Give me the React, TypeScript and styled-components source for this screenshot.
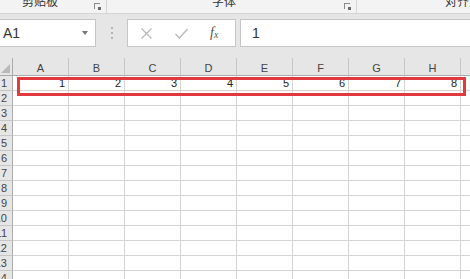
import styled, { createGlobalStyle } from 'styled-components'

const COLS = ['A', 'B', 'C', 'D', 'E', 'F', 'G', 'H']
const ROWS = 14
const UI_FONT = `"Liberation Sans", "Noto Sans CJK SC", sans-serif`

const Global = createGlobalStyle`
    html, body {
        margin: 0;
        padding: 0;
        background: #ffffff;
        overflow: hidden;
    }
    * {
        box-sizing: border-box;
    }
`

export default function App() {
    return (
        <>
            <Global />
            <Page>
                <Ribbon>
                    <Group $width={107}>
                        <GroupLabel $pad={22}>剪贴板</GroupLabel>
                        <Launcher />
                    </Group>
                    <Group $width={250}>
                        <GroupLabel $pad={105}>字体</GroupLabel>
                        <Launcher />
                    </Group>
                    <Group $width={120}>
                        <GroupLabel $pad={88}>对齐方式</GroupLabel>
                    </Group>
                </Ribbon>

                <FormulaBar>
                    <NameBox>
                        A1
                        <DropArrow />
                    </NameBox>
                    <Grip>
                        <span />
                        <span />
                        <span />
                    </Grip>
                    <FxButtons>
                        <FxIcon $muted>
                            <svg width='13' height='13' viewBox='0 0 13 13'>
                                <path d='M1.5 1.5 L11.5 11.5 M11.5 1.5 L1.5 11.5' stroke='currentColor' strokeWidth='1.3' fill='none' />
                            </svg>
                        </FxIcon>
                        <FxIcon $muted>
                            <svg width='15' height='13' viewBox='0 0 15 13'>
                                <path d='M1.5 7 L5.5 11 L13.5 2' stroke='currentColor' strokeWidth='1.4' fill='none' />
                            </svg>
                        </FxIcon>
                        <FxText>
                            f<sub>x</sub>
                        </FxText>
                    </FxButtons>
                    <FormulaInput>1</FormulaInput>
                </FormulaBar>

                <Sheet>
                    <Grid>
                        <Corner>
                            <SelectAll />
                        </Corner>
                        {COLS.map(c => (
                            <ColHead key={c}>{c}</ColHead>
                        ))}
                        <ColHead $last />
                        {Array.from({ length: ROWS }, (_, r) => (
                            <Row key={r} index={r + 1} />
                        ))}
                    </Grid>
                    <Highlight />
                </Sheet>
            </Page>
        </>
    )
}

function Row(props: { index: number }) {
    return (
        <>
            <RowHead>
                <RowNum>{props.index}</RowNum>
            </RowHead>
            {COLS.map((c, i) => (
                <Cell key={c}>{props.index === 1 ? i + 1 : ''}</Cell>
            ))}
            <Cell $last />
        </>
    )
}

const Page = styled('div')`
    width: 470px;
    height: 279px;
    display: flex;
    flex-direction: column;
    background: #e6e6e6;
    font-family: ${UI_FONT};
    overflow: hidden;
`

const Ribbon = styled('div')`
    display: flex;
    height: 14px;
    background: #f3f3f3;
    border-bottom: 1px solid #d5d5d5;
    overflow: hidden;
`

const Group = styled('div')<{ $width: number }>`
    position: relative;
    flex: 0 0 ${({ $width }) => $width}px;
    height: 100%;
    border-right: 1px solid #d5d5d5;
    &:last-child {
        border-right: none;
    }
`

const GroupLabel = styled('div')<{ $pad: number }>`
    padding-left: ${({ $pad }) => $pad}px;
    margin-top: -6px;
    font-size: 12px;
    line-height: 16px;
    color: #333333;
    white-space: nowrap;
`

const Launcher = styled('div')`
    position: absolute;
    right: 6px;
    top: 3px;
    width: 6px;
    height: 6px;
    border-left: 1px solid #8a8a8a;
    border-top: 1px solid #8a8a8a;
    &::after {
        content: '';
        position: absolute;
        right: -1px;
        bottom: -1px;
        width: 3px;
        height: 3px;
        background: #6a6a6a;
    }
`

const FormulaBar = styled('div')`
    display: flex;
    align-items: center;
    height: 44px;
    padding: 0 0 6px 0;
    gap: 4px;
`

const NameBox = styled('div')`
    position: relative;
    flex: 0 0 97px;
    height: 28px;
    margin-left: -1px;
    display: flex;
    align-items: center;
    padding-left: 3px;
    background: #ffffff;
    border: 1px solid #c6c6c6;
    font-size: 14px;
    color: #333333;
`

const DropArrow = styled('div')`
    position: absolute;
    right: 7px;
    top: 11px;
    width: 0;
    height: 0;
    border-left: 3px solid transparent;
    border-right: 3px solid transparent;
    border-top: 4px solid #777777;
`

const Grip = styled('div')`
    flex: 0 0 23px;
    display: flex;
    flex-direction: column;
    align-items: center;
    gap: 3px;
    span {
        width: 2px;
        height: 2px;
        background: #b4b4b4;
    }
`

const FxButtons = styled('div')`
    flex: 0 0 109px;
    height: 28px;
    display: flex;
    align-items: center;
    gap: 21px;
    padding-left: 12px;
    background: #ffffff;
    border: 1px solid #c6c6c6;
`

const FxIcon = styled('div')<{ $muted?: boolean }>`
    display: flex;
    color: ${({ $muted }) => ($muted ? '#b9b9b9' : '#555555')};
`

const FxText = styled('div')`
    font-family: "Liberation Serif", serif;
    font-style: italic;
    font-size: 14px;
    color: #555555;
    sub {
        font-size: 10px;
        vertical-align: -1px;
    }
`

const FormulaInput = styled('div')`
    flex: 1;
    height: 28px;
    display: flex;
    align-items: center;
    padding-left: 11px;
    background: #ffffff;
    border: 1px solid #c6c6c6;
    border-right: none;
    font-size: 14px;
    color: #333333;
`

const Sheet = styled('div')`
    position: relative;
    flex: 1;
    background: #ffffff;
    overflow: hidden;
`

const Grid = styled('div')`
    display: grid;
    grid-template-columns: 13px repeat(8, 56px) 1fr;
    grid-template-rows: 18px;
    grid-auto-rows: 15px;
    font-size: 11px;
    color: #222222;
`

const Corner = styled('div')`
    position: relative;
    background: #e6e6e6;
    border-right: 1px solid #ababab;
    border-bottom: 1px solid #ababab;
`

const SelectAll = styled('div')`
    position: absolute;
    right: 2px;
    bottom: 2px;
    width: 0;
    height: 0;
    border-left: 9px solid transparent;
    border-bottom: 9px solid #b9b9b9;
`

const ColHead = styled('div')<{ $last?: boolean }>`
    display: flex;
    align-items: center;
    justify-content: center;
    padding-top: 3px;
    background: #e6e6e6;
    border-right: ${({ $last }) => ($last ? 'none' : '1px solid #c6c6c6')};
    border-bottom: 1px solid #ababab;
    color: #444444;
`

const RowHead = styled('div')`
    overflow: hidden;
    background: #e6e6e6;
    border-right: 1px solid #ababab;
    border-bottom: 1px solid #c6c6c6;
`

const RowNum = styled('div')`
    width: 20px;
    margin-left: -13px;
    text-align: right;
    line-height: 14px;
    color: #444444;
`

const Cell = styled('div')<{ $last?: boolean }>`
    display: flex;
    align-items: center;
    justify-content: flex-end;
    padding-right: 3px;
    border-right: ${({ $last }) => ($last ? 'none' : '1px solid #d4d4d4')};
    border-bottom: 1px solid #d4d4d4;
`

const Highlight = styled('div')`
    position: absolute;
    left: 17px;
    top: 19px;
    width: 449px;
    height: 19px;
    border: 3px solid #e0393e;
    pointer-events: none;
`
